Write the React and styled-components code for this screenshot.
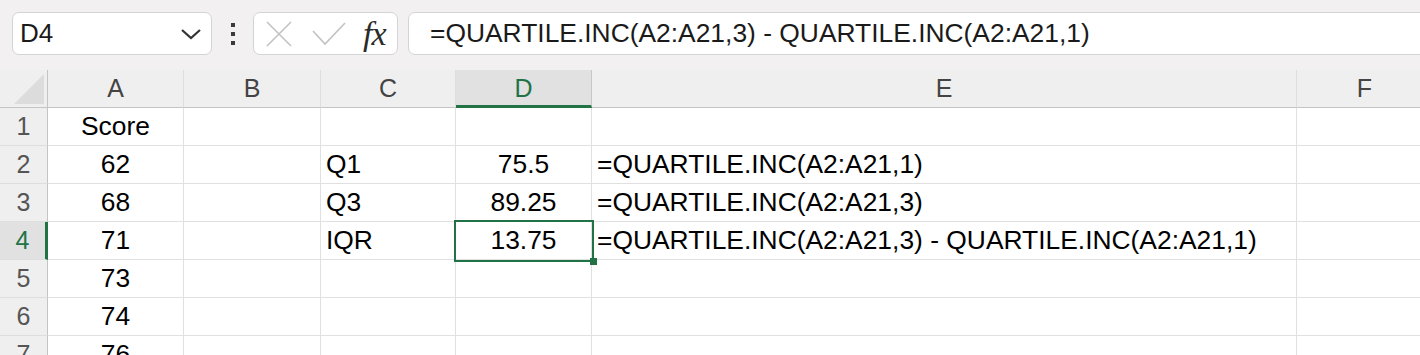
import React from "react";
import styled, { createGlobalStyle, css } from "styled-components";

const GREEN = "#217346";

const Global = createGlobalStyle`
  html, body {
    margin: 0;
    padding: 0;
    background: #ffffff;
  }
  body {
    width: 1420px;
    height: 355px;
    overflow: hidden;
    font-family: "Liberation Sans", Arial, sans-serif;
  }
`;

const Screen = styled.div`
  display: flex;
  flex-direction: column;
  width: 1420px;
  height: 355px;
  overflow: hidden;
`;

const Toolbar = styled.div`
  display: flex;
  flex-shrink: 0;
  align-items: center;
  height: 70px;
  padding: 0 0 3px 12px;
  box-sizing: border-box;
  background: #f2f0f0;
  overflow: hidden;
`;

const Box = styled.div`
  display: flex;
  align-items: center;
  height: 43px;
  box-sizing: border-box;
  background: #ffffff;
  border: 1px solid #d4d4d4;
  border-radius: 7px;
`;

const NameBox = styled(Box)`
  width: 200px;
  justify-content: space-between;
  padding: 0 9px 0 7px;
  font-size: 26px;
  color: #1a1a1a;
`;

const Dots = styled.div`
  display: flex;
  flex-direction: column;
  align-items: center;
  gap: 5px;
  width: 41px;

  span {
    width: 4px;
    height: 4px;
    background: #3a3a3a;
  }
`;

const FxBox = styled(Box)`
  width: 145px;
  padding: 0 0 0 12px;
  gap: 20px;
`;

const Fx = styled.span`
  font-family: "Liberation Serif", "DejaVu Serif", serif;
  font-style: italic;
  font-size: 34px;
  color: #2a2a2a;
  margin-left: -3px;
  letter-spacing: -1px;
`;

const FormulaBar = styled(Box)`
  flex: 1;
  margin-left: 10px;
  margin-right: -20px;
  padding-left: 21px;
  font-size: 26.4px;
  color: #1a1a1a;
  border-radius: 7px 0 0 7px;
`;

const Sheet = styled.div`
  display: grid;
  flex-shrink: 0;
  grid-template-columns: 48px 136px 137px 135px 136px 705px 136px;
  grid-template-rows: 38px;
  grid-auto-rows: 38px;
  background: #ffffff;
`;

const ColHead = styled.div`
  display: flex;
  align-items: center;
  justify-content: center;
  box-sizing: border-box;
  background: #efefef;
  border-right: 1px solid #dedede;
  border-bottom: 1px solid #c4c4c4;
  font-size: 25px;
  color: #444444;
  ${(p) =>
    p.$active &&
    css`
      background: #e1e1e1;
      color: ${GREEN};
      border-bottom: 3px solid ${GREEN};
      border-right-color: #c8c8c8;
      padding-top: 2px;
    `}
`;

const Corner = styled(ColHead)`
  position: relative;
  border-right: 1px solid #c4c4c4;

  span {
    position: absolute;
    right: 3px;
    bottom: 3px;
    width: 30px;
    height: 30px;
    background: #dcdcdc;
    clip-path: polygon(100% 0, 100% 100%, 0 100%);
  }
`;

const RowHead = styled.div`
  display: flex;
  align-items: center;
  justify-content: center;
  box-sizing: border-box;
  background: #efefef;
  border-right: 1px solid #c4c4c4;
  border-bottom: 1px solid #dedede;
  font-size: 25px;
  color: #555555;
  ${(p) =>
    p.$active &&
    css`
      background: #e1e1e1;
      color: ${GREEN};
      border-right: 3px solid ${GREEN};
    `}
`;

const Cell = styled.div`
  position: relative;
  display: flex;
  align-items: center;
  justify-content: ${(p) => (p.$align === "center" ? "center" : "flex-start")};
  padding: 0 ${(p) => (p.$align === "center" ? "0" : "5px")};
  box-sizing: border-box;
  border-right: 1px solid #e0e0e0;
  border-bottom: 1px solid #e0e0e0;
  font-size: 26.4px;
  color: #000000;
  white-space: nowrap;
  ${(p) =>
    p.$selected &&
    css`
      z-index: 2;
      &::after {
        content: "";
        position: absolute;
        top: -2px;
        left: -2px;
        right: -3px;
        bottom: -3px;
        border: 2px solid ${GREEN};
      }
      &::before {
        content: "";
        position: absolute;
        right: -6px;
        bottom: -6px;
        width: 7px;
        height: 7px;
        background: ${GREEN};
        z-index: 3;
      }
    `}
`;

const columns = ["A", "B", "C", "D", "E", "F"];
const centered = { A: true, D: true };

const rows = [
  { A: "Score" },
  { A: "62", C: "Q1", D: "75.5", E: "=QUARTILE.INC(A2:A21,1)" },
  { A: "68", C: "Q3", D: "89.25", E: "=QUARTILE.INC(A2:A21,3)" },
  { A: "71", C: "IQR", D: "13.75", E: "=QUARTILE.INC(A2:A21,3) - QUARTILE.INC(A2:A21,1)" },
  { A: "73" },
  { A: "74" },
  { A: "76" },
];

const active = { col: "D", row: 4 };

export default function App() {
  return (
    <Screen>
      <Global />
      <Toolbar>
        <NameBox>
          <span>D4</span>
          <svg width="22" height="12" viewBox="0 0 22 12">
            <path d="M2 2 L11 10 L20 2" fill="none" stroke="#333" strokeWidth="2.2" />
          </svg>
        </NameBox>
        <Dots>
          <span />
          <span />
          <span />
        </Dots>
        <FxBox>
          <svg width="26" height="26" viewBox="0 0 26 26">
            <path d="M1 1 L25 25 M25 1 L1 25" stroke="#c2c2c2" strokeWidth="1.6" fill="none" />
          </svg>
          <svg width="34" height="24" viewBox="0 0 34 24">
            <path d="M1 9 L13 22 L33 1" stroke="#c2c2c2" strokeWidth="1.6" fill="none" />
          </svg>
          <Fx>fx</Fx>
        </FxBox>
        <FormulaBar>=QUARTILE.INC(A2:A21,3) - QUARTILE.INC(A2:A21,1)</FormulaBar>
      </Toolbar>
      <Sheet>
        <Corner>
          <span />
        </Corner>
        {columns.map((c) => (
          <ColHead key={c} $active={c === active.col}>
            {c}
          </ColHead>
        ))}
        {rows.map((r, i) => (
          <React.Fragment key={i}>
            <RowHead $active={i + 1 === active.row}>{i + 1}</RowHead>
            {columns.map((c) => (
              <Cell
                key={c}
                $align={centered[c] ? "center" : "left"}
                $selected={c === active.col && i + 1 === active.row}
              >
                {r[c]}
              </Cell>
            ))}
          </React.Fragment>
        ))}
      </Sheet>
    </Screen>
  );
}
